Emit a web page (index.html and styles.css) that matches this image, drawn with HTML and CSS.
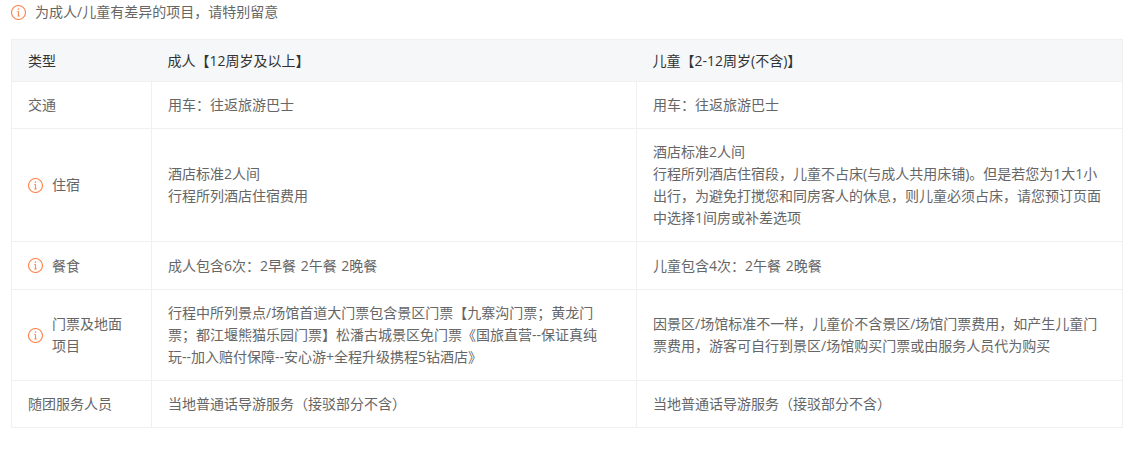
FILE: index.html
```html
<!DOCTYPE html>
<html lang="zh">
<head>
<meta charset="utf-8">
<title>费用差异</title>
<link rel="stylesheet" href="styles.css">
</head>
<body>
<div class="notice">
  <svg class="info" viewBox="0.5 0.5 15 15"><circle cx="8" cy="8" r="7"/><path d="M8 7v4.5M6.8 11.5h2.4M6.8 7H8"/><circle class="dot" cx="8" cy="4.6" r=".8"/></svg>
  <span>为成人/儿童有差异的项目，请特别留意</span>
</div>
<table class="grid">
  <colgroup><col class="c1"><col class="c2"><col class="c3"></colgroup>
  <thead>
    <tr class="r-head"><th>类型</th><th>成人【12周岁及以上】</th><th>儿童【2-12周岁(不含)】</th></tr>
  </thead>
  <tbody>
    <tr class="r-a"><td>交通</td><td>用车：往返旅游巴士</td><td>用车：往返旅游巴士</td></tr>
    <tr class="r-b">
      <td><div class="kind"><svg class="info" viewBox="0.5 0.5 15 15"><circle cx="8" cy="8" r="7"/><path d="M8 7v4.5M6.8 11.5h2.4M6.8 7H8"/><circle class="dot" cx="8" cy="4.6" r=".8"/></svg><span>住宿</span></div></td>
      <td>酒店标准2人间<br>行程所列酒店住宿费用</td>
      <td>酒店标准2人间<br>行程所列酒店住宿段，儿童不占床(与成人共用床铺)。但是若您为1大1小出行，为避免打搅您和同房客人的休息，则儿童必须占床，请您预订页面中选择1间房或补差选项</td>
    </tr>
    <tr class="r-c">
      <td><div class="kind"><svg class="info" viewBox="0.5 0.5 15 15"><circle cx="8" cy="8" r="7"/><path d="M8 7v4.5M6.8 11.5h2.4M6.8 7H8"/><circle class="dot" cx="8" cy="4.6" r=".8"/></svg><span>餐食</span></div></td>
      <td>成人包含6次：2早餐 2午餐 2晚餐</td>
      <td>儿童包含4次：2午餐 2晚餐</td>
    </tr>
    <tr class="r-d">
      <td><div class="kind"><svg class="info" viewBox="0.5 0.5 15 15"><circle cx="8" cy="8" r="7"/><path d="M8 7v4.5M6.8 11.5h2.4M6.8 7H8"/><circle class="dot" cx="8" cy="4.6" r=".8"/></svg><span>门票及地面项目</span></div></td>
      <td>行程中所列景点/场馆首道大门票包含景区门票【九寨沟门票；黄龙门票；都江堰熊猫乐园门票】松潘古城景区免门票《国旅直营--保证真纯<br>玩--加入赔付保障--安心游+全程升级携程5钻酒店》</td>
      <td>因景区/场馆标准不一样，儿童价不含景区/场馆门票费用，如产生儿童门票费用，游客可自行到景区/场馆购买门票或由服务人员代为购买</td>
    </tr>
    <tr class="r-e"><td>随团服务人员</td><td>当地普通话导游服务（接驳部分不含）</td><td>当地普通话导游服务（接驳部分不含）</td></tr>
  </tbody>
</table>
</body>
</html>
```
FILE: styles.css
```css
html, body { margin: 0; padding: 0; background: #fff; }
body {
  width: 1143px;
  height: 449px;
  overflow: hidden;
  font-family: "Open Sans", "Noto Sans CJK SC", sans-serif;
  font-size: 14px;
  line-height: 22px;
  color: #666;
}
.notice {
  display: flex;
  align-items: center;
  gap: 9px;
  height: 24px;
  padding-left: 11px;
}
.info {
  flex: none;
  width: 15px;
  height: 15px;
  fill: none;
  stroke: #ff8450;
  stroke-width: 1.1;
}
.info .dot { fill: #ff8450; stroke: none; }
.grid {
  margin: 15px 0 0 11px;
  width: 1111px;
  table-layout: fixed;
  border-collapse: collapse;
  border: 1px solid #eef0f2;
}
.c1 { width: 140px; }
.c2 { width: 485px; }
.c3 { width: 486px; }
th, td {
  padding: 0 16px;
  text-align: left;
  vertical-align: middle;
  border: 1px solid #eef0f2;
  font-weight: 400;
}
th { background: #f5f7f9; color: #333; border-left: 0; border-right: 0; }
.r-head { height: 42px; }
.r-a { height: 47px; }
.r-b { height: 113px; }
.r-c { height: 48px; word-spacing: 1px; }
.r-d { height: 91px; }
.r-e { height: 47px; }
.kind { display: flex; align-items: center; gap: 9px; }
```
